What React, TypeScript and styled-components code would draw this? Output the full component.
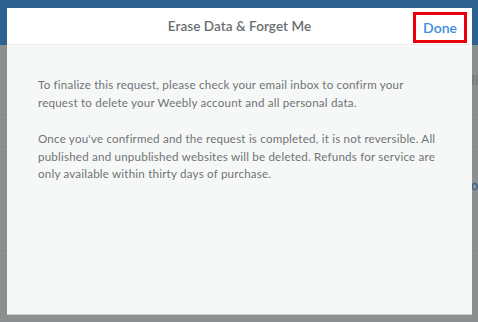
import React from 'react'
import styled, { createGlobalStyle } from 'styled-components'

const GlobalStyle = createGlobalStyle`
  html, body {
    margin: 0;
    padding: 0;
    width: 478px;
    height: 322px;
    overflow: hidden;
    background: #8c8f90;
  }
`

function App() {
  return (
    <>
      <GlobalStyle />
      <Page>
        <TopBar />
        <Backdrop>
          <Row $height={70}>Hi</Row>
          <Row $height={32} />
          <Row $height={104} $align="flex-start">
            <LinkText>o</LinkText>
          </Row>
        </Backdrop>
        <Modal>
          <Header>
            <Title>Erase Data &amp; Forget Me</Title>
            <DoneButton>Done</DoneButton>
          </Header>
          <Body>
            <Para>
              To finalize this request, please check your email inbox to confirm your
              request to delete your Weebly account and all personal data.
            </Para>
            <Para>
              Once you've confirmed and the request is completed, it is not reversible. All
              published and unpublished websites will be deleted. Refunds for service are
              only available within thirty days of purchase.
            </Para>
          </Body>
        </Modal>
      </Page>
    </>
  )
}

export default App

const Page = styled.div`
  position: relative;
  width: 478px;
  height: 322px;
  font-family: Lato, 'Open Sans', sans-serif;
`

const TopBar = styled.div`
  height: 45px;
  background: #2d6190;
`

const Backdrop = styled.div`
  display: flex;
  flex-direction: column;
`

const Row = styled.div<{ $height: number; $align?: string }>`
  height: ${(p) => p.$height}px;
  box-sizing: border-box;
  border-bottom: 1px solid #858889;
  display: flex;
  align-items: ${(p) => p.$align || 'center'};
  justify-content: flex-end;
  padding-top: ${(p) => (p.$align ? '30px' : '0')};
  color: #6f7273;
  font-size: 13px;
`

const LinkText = styled.span`
  color: #2c5d8f;
`

const Modal = styled.div`
  position: absolute;
  left: 7px;
  top: 8px;
  width: 465px;
  height: 307px;
  background: #f6f8f8;
  border-bottom: 1px solid #c9cbcc;
  box-sizing: border-box;
  display: flex;
  flex-direction: column;
`

const Header = styled.div`
  position: relative;
  height: 36px;
  background: #ffffff;
  border-bottom: 1px solid #ebeded;
  display: flex;
  align-items: center;
  justify-content: center;
`

const Title = styled.h2`
  margin: 0;
  font-size: 13.5px;
  font-weight: 600;
  color: #6a6d70;
  letter-spacing: 0.05px;
`

const DoneButton = styled.button`
  position: absolute;
  right: 5px;
  top: 4px;
  width: 54px;
  height: 31px;
  box-sizing: border-box;
  border: 3px solid #e8000b;
  background: transparent;
  color: #3b8ede;
  font-family: Lato, 'Open Sans', sans-serif;
  font-size: 14px;
  font-weight: 600;
  padding: 0;
  cursor: pointer;
`

const Body = styled.div`
  padding: 31px 30px 0 31px;
  display: flex;
  flex-direction: column;
  gap: 19px;
`

const Para = styled.p`
  margin: 0;
  font-size: 11.6px;
  line-height: 17.5px;
  color: #707375;
  letter-spacing: 0.2px;
`
